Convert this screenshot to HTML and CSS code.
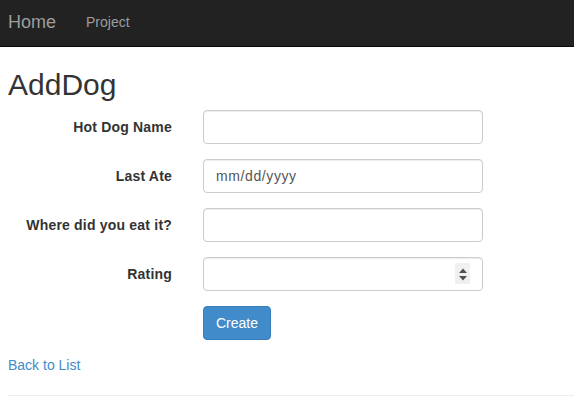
FILE: index.html
```html
<!DOCTYPE html>
<html lang="en">
<head>
<meta charset="utf-8">
<title>AddDog</title>
<link rel="stylesheet" href="styles.css">
</head>
<body>
<nav class="navbar">
  <a class="brand" href="#">Home</a>
  <a class="nav-link" href="#">Project</a>
</nav>
<main class="container">
  <h2 class="title">AddDog</h2>
  <form class="form">
    <div class="form-row">
      <label class="form-label" for="name">Hot Dog Name</label>
      <input class="form-control" id="name" type="text">
    </div>
    <div class="form-row">
      <label class="form-label" for="ate">Last Ate</label>
      <input class="form-control date" id="ate" type="text" placeholder="mm/dd/yyyy">
    </div>
    <div class="form-row">
      <label class="form-label" for="where">Where did you eat it?</label>
      <input class="form-control" id="where" type="text">
    </div>
    <div class="form-row">
      <label class="form-label" for="rating">Rating</label>
      <div class="number-wrap">
        <input class="form-control" id="rating" type="number">
        <span class="spinner" aria-hidden="true">
          <svg width="14" height="20" viewBox="0 0 14 20"><path d="M3 9 L7 4.5 L11 9 Z" fill="#505050"/><path d="M3 12 L7 16.5 L11 12 Z" fill="#505050"/></svg>
        </span>
      </div>
    </div>
    <div class="form-row">
      <span></span>
      <div><button class="btn" type="button">Create</button></div>
    </div>
  </form>
  <div class="back"><a href="#">Back to List</a></div>
  <hr class="rule">
</main>
</body>
</html>
```
FILE: styles.css
```css
* { box-sizing: border-box; }
html, body { margin: 0; }
body {
  font-family: "Liberation Sans", Arial, sans-serif;
  font-size: 14px;
  line-height: 20px;
  color: #333;
  background: #fff;
}
a { color: #428bca; text-decoration: none; }

.navbar {
  display: flex;
  align-items: flex-start;
  height: 47px;
  background: #222;
  border-bottom: 1px solid #080808;
  padding: 0 8px;
}
.brand {
  color: #9d9d9d;
  font-size: 18px;
  line-height: 20px;
  padding: 12px 15px 0 0;
}
.nav-link {
  color: #9d9d9d;
  font-size: 14px;
  line-height: 20px;
  padding: 12px 15px 0 15px;
}

.container { padding: 0 0 0 8px; }

.title {
  font-size: 30px;
  font-weight: 500;
  line-height: 33px;
  margin: 21px 0 9px;
  color: #333;
}

.form { margin: 0; }
.form-row {
  display: grid;
  grid-template-columns: 164px 280px;
  column-gap: 31px;
  margin-bottom: 15px;
}
.form-label {
  font-weight: bold;
  text-align: right;
  padding-top: 7px;
  letter-spacing: 0.2px;
}
.form-control {
  display: block;
  width: 280px;
  height: 34px;
  padding: 6px 12px;
  font-family: inherit;
  font-size: 14px;
  line-height: 20px;
  color: #555;
  background: #fff;
  border: 1px solid #ccc;
  border-radius: 4px;
  box-shadow: inset 0 1px 1px rgba(0,0,0,.075);
  outline: none;
}
.form-control::placeholder { color: #555; opacity: 1; }
.date::placeholder { letter-spacing: 0.6px; }
.form-control[type=number] { -moz-appearance: textfield; }
.form-control::-webkit-inner-spin-button,
.form-control::-webkit-outer-spin-button { -webkit-appearance: none; margin: 0; }

.number-wrap { position: relative; width: 280px; }
.spinner {
  position: absolute;
  top: 6px;
  left: 252px;
  width: 15px;
  height: 21px;
  background: #f0f0f0;
  display: flex;
  align-items: center;
  justify-content: center;
}
.spinner svg { display: block; }

.btn {
  display: inline-block;
  height: 34px;
  padding: 6px 12px;
  font-family: inherit;
  font-size: 14px;
  line-height: 20px;
  color: #fff;
  background: #428bca;
  border: 1px solid #357ebd;
  border-radius: 4px;
  cursor: pointer;
}

.back { line-height: 20px; }

.rule {
  margin: 20px 0 0;
  border: 0;
  border-top: 1px solid #eee;
}
```
